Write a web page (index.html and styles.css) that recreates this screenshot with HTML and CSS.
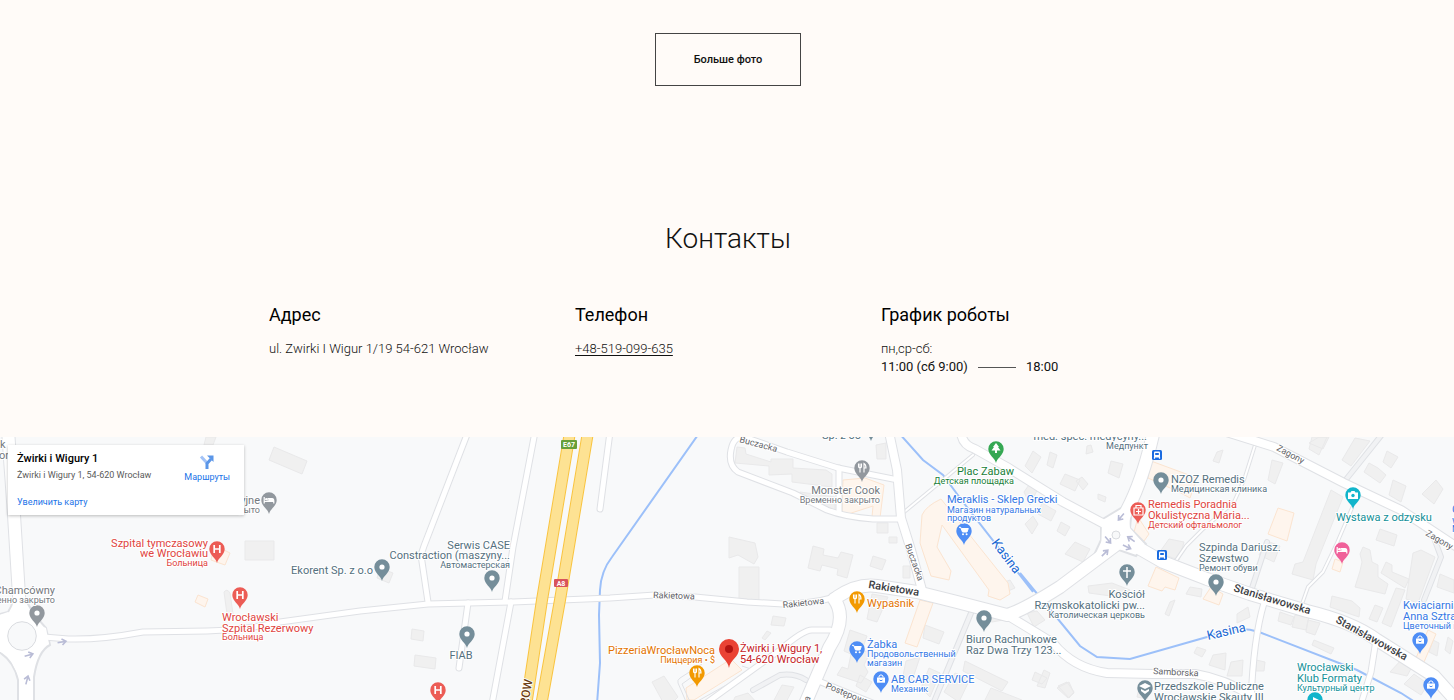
FILE: index.html
```html
<!DOCTYPE html>
<html lang="ru">
<head>
<meta charset="utf-8">
<meta name="viewport" content="width=device-width, initial-scale=1">
<title>Контакты</title>
<link rel="stylesheet" href="styles.css">
</head>
<body>
<main class="page">
  <section class="gallery-more">
    <button class="more-button" type="button">Больше фото</button>
  </section>

  <section class="contacts">
    <h2 class="contacts-title">Контакты</h2>
    <div class="contacts-grid">
      <div>
        <h3 class="column-title">Адрес</h3>
        <p class="column-text">ul. Zwirki I Wigur 1/19 54-621 Wrocław</p>
      </div>
      <div>
        <h3 class="column-title">Телефон</h3>
        <p class="column-text"><a class="phone" href="tel:+48519099635">+48-519-099-635</a></p>
      </div>
      <div>
        <h3 class="column-title">График роботы</h3>
        <p class="column-text">пн,ср-сб:</p>
        <p class="hours"><span>11:00 (сб 9:00)</span><span class="hours-line"></span><span>18:00</span></p>
      </div>
    </div>
  </section>

  <section class="map" aria-label="Карта">
    <svg class="map-canvas" viewBox="0 437 1454 263" preserveAspectRatio="xMidYMin slice">
      <defs>
        <path id="pin" d="M0 14C-1 9-7.700 6-7.700 0A7.700 7.700 0 1 1 7.700 0C7.700 6 1 9 0 14Z"/>
        <g id="dot"><use href="#pin"/><circle r="2.600" fill="#fff"/></g>
        <g id="hospital"><use href="#pin"/><path d="M-2.800-4V4M2.800-4V4M-2.800 0H2.800" fill="none" stroke="#fff" stroke-width="1.700"/></g>
        <g id="food"><use href="#pin"/><path d="M-3.500-4.500V-1.500Q-3.500 0-2 0T-.500-1.500V-4.500M-2-4.500V4.500M2 4.500V-4.500Q4-3.500 4 0H2" fill="none" stroke="#fff" stroke-width="1.100"/></g>
        <g id="cart"><use href="#pin"/><path d="M-5-3.700H-3.300L-1.500 1H3L4.300-2.500H-2.600" fill="#fff" stroke="#fff"/><circle cx="-1" cy="3.200" r="1" fill="#fff"/><circle cx="2.600" cy="3.200" r="1" fill="#fff"/></g>
        <g id="bag"><use href="#pin"/><path d="M-4-1.500H4V3.700H-4Z" fill="#fff"/><path d="M-2-1.500V-3Q0-5.500 2-3V-1.500" fill="none" stroke="#fff"/><path d="M-1.500 1Q0 2.500 1.500 1" fill="none" stroke="#4e8df5"/></g>
        <g id="bed"><use href="#pin"/><path d="M-4.800-3V3.500M-4.800 1.500H4.800V3.500M-1 1V-1.500H3Q4.800-1.500 4.800 1" fill="none" stroke="#fff" stroke-width="1.200"/><path d="M-.500-1.500H3Q4.500-1.500 4.500 1H-.500Z" fill="#fff"/><circle cx="-2.700" cy="-.800" r="1.200" fill="#fff"/></g>
        <g id="bus"><rect x="-5" y="-5" width="10" height="10" rx="1.500" fill="#1a6be0"/><rect x="-3" y="-3.500" width="6" height="6" rx="1" fill="#fff"/><path d="M-1.800-2H1.800V0H-1.800Z" fill="#1a6be0"/><path d="M-2.500 2V3.700M2.500 2V3.700" stroke="#fff" stroke-width="1.200"/></g>
        <path id="arrow" d="M-4.500 0H3M0-3L4 0L0 3" fill="none" stroke="#b9bcd6" stroke-width="1.600"/>
        <g id="lanes">
          <path d="M1256 442L1244 480L1234 502L1202 530L1186 546L1175 562"/>
          <path d="M1352 508L1337 543L1323 572L1308 587L1302 604"/>
          <path d="M903 513L973 455"/>
        </g>
        <g id="streets">
          <path d="M468 432L424 546L421 555L428 602"/>
          <path d="M535 432L513 547L505 601"/>
          <path d="M511 602L492 704"/>
          <path d="M468 603L459 668"/>
          <path d="M610 432L600 509"/>
          <path d="M44 637L68 639Q100 640 143 632L207 631Q245 630 280 622L360 611L428 604L513 602L610 598L655 595L695 597L747 602L783 604Q810 604 836 597"/>
          <path d="M898 480L873 475L838 468L787 452L747 438Q734 434 731 450Q728 465 738 472L793 493L827 510Q845 517 873 519H901"/>
          <path d="M839 468V513"/>
          <path d="M830 630H812Q803 630 780 650L705 704"/>
          <path d="M816 680L875 704"/>
          <path d="M1264 603Q1253 640 1251 704"/>
          <path d="M1376 640L1371 672L1361 704"/>
        </g>
        <g id="roads">
          <path d="M889 432L897 470L901 518L911 550L922 590"/>
          <path d="M961 432Q962 445 975 449L1007 467L1063 502L1108 526"/>
          <path d="M1007 615L1053 643Q1073 668 1107 673L1153 674H1195Q1225 679 1254 697"/>
          <path d="M1220 430L1274 447L1344 483L1401 510L1460 549"/>
        </g>
        <g id="avenues">
          <path d="M8 430L14 515L20 612"/>
          <path d="M25 652V705"/>
          <path d="M837 597Q858 583 877 586L917 592L957 602L1007 615Q1022 611 1060 587L1116 545"/>
          <path d="M1154 430Q1143 480 1127 510L1116 535"/>
          <path d="M1116 535L1163 562L1207 579L1250 594L1307 611Q1353 622 1377 640L1434 676L1460 705"/>
          <path d="M834 599Q848 618 829 648L805 704"/>
        </g>
      </defs>
      <rect x="-700" y="437" width="2854" height="900" fill="#f8f9fa"/>

      <path class="building" d="M274 447L307 461L302 474L269 460ZM245 541H274V560H245ZM224 592Q227 588 230 593L233 614H227ZM206 437H216L213 445H204ZM412 629L424 631L423 641L411 639ZM415 655L436 658L435 669L414 666ZM380 568L393 573L389 583L377 578Z"/>
      <path class="building" d="M737 447L745 448L746 454L771 462V459L793 459V468L826 470L832 474V487L792 482V474L769 475V466L735 463ZM729 537L755 543L758 557L754 564L738 555L729 558ZM739 567H759V602H739ZM773 616L786 618L784 626L771 625ZM767 631L771 633L765 640L762 638ZM813 546L824 549L823 555L838 558L841 552L853 555L847 578L837 575L838 569L822 565L820 571L808 568ZM873 556L886 560L882 570L870 566ZM876 445L886 443V459H877ZM800 492L835 497V510L800 500ZM877 523H888V533H877ZM889 537H897V543H889ZM903 566H910V578H903ZM872 594L888 597L877 622L867 619ZM850 630L867 636L862 650L870 653L864 665L868 672L861 683L837 675L842 667L848 669L851 654L844 651ZM860 675L872 682L866 692L856 686ZM652 682L664 676L678 697L671 704H664ZM735 697L748 693L758 704H732ZM782 685L794 687L785 704H772Z"/>
      <path class="building" d="M925 625L944 632L939 644L923 638ZM906 661L920 657L911 684L902 681ZM921 688L929 668L940 673L930 697ZM944 692L955 673L970 679L959 702ZM965 661L1008 682L1002 691L963 671ZM983 704L991 688L1022 700L1018 708ZM1037 686L1044 670L1050 673L1045 688ZM1058 686L1067 682L1074 692L1069 698ZM1002 583L1010 580L1015 588L1006 592ZM978 605L993 608L1003 620L992 622L978 614ZM1025 466L1033 451L1041 457L1032 473ZM1050 452L1057 455L1053 468L1047 465ZM1087 446L1091 445L1093 452L1086 454ZM1111 461L1123 464L1119 478L1108 473ZM1065 474L1080 480L1075 491L1060 484ZM1076 481L1082 477L1088 484L1083 490ZM1098 494L1106 497L1105 502L1098 499ZM1042 503L1056 511L1051 521L1038 514ZM1025 524L1033 516L1038 524L1032 534ZM1061 522L1070 527L1065 536L1057 531ZM1065 554L1075 542L1090 549L1083 562ZM1024 492L1033 479L1040 484L1030 505ZM1027 613L1037 611L1045 620L1034 627ZM1035 672L1047 678L1042 684L1032 680ZM1057 688L1069 682L1074 693L1068 698ZM1088 586L1112 583L1130 590L1118 597L1089 593Z"/>
      <path class="building" d="M1169 539L1184 542L1179 560L1159 553ZM1190 587L1202 589L1201 597L1186 594ZM1170 602L1175 600L1169 616L1165 614ZM1237 614L1248 607L1250 617L1237 623ZM1197 647L1206 650L1202 657L1194 653ZM1213 655L1226 653L1225 670L1209 665ZM1231 662L1243 660L1242 676H1227ZM1217 452L1223 450L1219 463L1213 461ZM1312 437L1327 437L1319 455L1309 449ZM1272 460L1283 463L1275 484L1268 480ZM1319 437H1329L1323 449L1309 443ZM1355 438L1370 441L1351 466L1342 460ZM1387 451L1398 457L1391 468L1383 462ZM1369 463L1378 468L1386 475L1380 483L1364 472ZM1393 480L1406 486L1401 502L1389 495ZM1436 480L1443 489L1434 504L1422 494ZM1331 490L1343 497L1316 564L1313 580L1292 574L1295 564L1303 562ZM1380 529L1397 535L1394 546L1376 540ZM1413 553L1421 550L1435 557L1418 603L1406 599ZM1440 574L1454 580V593L1437 587ZM1363 547L1370 550L1372 562L1378 565V577L1388 584L1385 594L1355 587L1360 571L1362 562L1360 554ZM1386 562L1392 565V572L1409 579L1405 588L1381 573ZM1332 596L1352 601L1360 608L1359 617L1330 607ZM1375 605L1383 608L1377 622L1369 619ZM1396 588L1405 590L1391 627L1382 623ZM1280 612L1294 617L1291 625L1278 621ZM1295 615L1309 617L1306 630L1292 627ZM1308 620L1320 623L1315 635L1306 632ZM1314 640L1334 648L1331 654L1312 645ZM1402 659L1413 665L1407 676L1390 672ZM1414 674L1428 684L1421 695L1404 684ZM1433 640L1439 643L1437 656L1429 652ZM1267 541L1280 546L1274 562L1259 555ZM1256 660L1265 662L1264 671H1256ZM1140 684L1151 689L1147 699L1137 697ZM1448 637L1453 641L1450 654L1445 650Z"/>
      <path class="shop" d="M843 480L865 478L884 485L880 518L872 517L873 506L842 516ZM922 515Q926 506 941 499L1008 583L1010 594L1000 600L988 596L989 590L942 525L937 547L951 571L949 580L931 576L920 543ZM920 600L933 603L917 647L905 643ZM686 688L731 659L742 670L694 700H687ZM1151 461L1197 478L1190 498L1179 492L1148 478ZM1138 517L1149 534L1144 541L1133 536ZM1156 567L1179 578L1175 590L1165 587L1162 591L1148 586ZM1211 587L1223 594L1219 605L1203 599ZM1278 508L1294 513L1287 541L1268 534ZM1335 559L1343 562L1340 572L1332 569ZM198 595L208 599L205 607L195 602ZM214 545L230 553L225 565L211 560ZM1428 630L1436 634L1424 662L1416 658Z"/>

      <path class="water" d="M700 432L612 557Q601 571 600 590L599 615L600 663L597 704M898 432L923 460L943 475L963 502L1033 592M1020 573L1053 613L1080 646L1097 657L1130 659L1207 637Q1236 624 1259 632L1357 670L1401 693L1418 704"/>

      <g class="service-edge"><path d="M1344 482L1384 432M1267 542L1252 588M1434 538L1441 557L1424 600M971 613L933 704M753 690L780 675Q795 673 806 680"/></g>
      <g class="service"><path d="M1344 482L1384 432M1267 542L1252 588M1434 538L1441 557L1424 600M971 613L933 704M753 690L780 675Q795 673 806 680"/></g>
      <path class="kerb" d="M687 704L678 683Q677 680 680 678L702 664M691 704L682 684L703 669M742 666L751 669L746 674L696 702"/>
      <use href="#lanes" class="lane-edge"/><use href="#lanes" class="lane"/>
      <use href="#streets" class="street-edge"/><use href="#roads" class="road-edge"/><use href="#avenues" class="avenue-edge"/>
      <path class="junction" d="M8 612Q12 606 13 600H26Q32 613 46 628L50 645Q38 651 34 677V704H18V680Q14 660-4 650V615Z"/>
      <path class="junction" d="M1101 520L1121 508H1132L1130 528L1146 544L1136 556L1119 550L1102 559L1094 555L1101 540Z"/>
      <use href="#streets" class="street"/><use href="#roads" class="road"/><use href="#avenues" class="avenue"/>
      <path class="junction-fill" d="M8 612L46 628L49 644L34 650L32 677H19L8 655L-4 650V616ZM1102 521L1128 512L1130 528L1142 542L1134 552L1118 549L1101 556Z"/>
      <circle class="island" cx="22" cy="636" r="14.300"/>
      <circle class="island" cx="1116" cy="535" r="4"/>
      <path class="highway-edge" d="M570 432L542 600L526 706M588 432L560 600L541 706"/>
      <path class="highway" d="M570 432L542 600L526 706M588 432L560 600L541 706"/>

      <g>
        <use href="#arrow" transform="translate(62 642) rotate(-10)"/>
        <use href="#arrow" transform="translate(29 655) rotate(-15)"/>
        <use href="#arrow" transform="translate(27 680) rotate(-75)"/>
        <use href="#arrow" transform="translate(1121 517) rotate(130)"/>
        <use href="#arrow" transform="translate(1108 540) rotate(50)"/>
        <use href="#arrow" transform="translate(1105 553) rotate(-45)"/>
        <use href="#arrow" transform="translate(1131 539) rotate(215)"/>
        <use href="#arrow" transform="translate(1127 547) rotate(25)"/>
      </g>

      <rect x="561" y="440" width="16" height="9" rx="1" fill="#689f38"/>
      <text class="shield" x="569" y="447">E67</text>
      <rect x="554" y="579" width="14" height="8" rx="1" fill="#d8545b"/>
      <text class="shield" x="561" y="586">A8</text>

      <g fill="#92989e">
        <use href="#bed" x="269" y="500"/><use href="#dot" x="37" y="613"/><use href="#food" x="862" y="468"/>
      </g>
      <g fill="#758e9a">
        <use href="#dot" x="382" y="567"/><use href="#dot" x="492" y="578"/><use href="#dot" x="467" y="634"/>
        <use href="#dot" x="984" y="618"/><use href="#dot" x="1161" y="480"/><use href="#dot" x="1216" y="582"/>
        <use href="#pin" x="1127" y="572"/><use href="#pin" x="1145" y="688"/><use href="#pin" x="871" y="427"/>
      </g>
      <path d="M1127 567V578M1123 571H1131" stroke="#fff" stroke-width="1.500"/>
      <path d="M1139 686L1145 683L1151 686L1145 689ZM1141 689L1145 691L1149 689V691L1145 694L1141 691Z" fill="#fff"/>
      <g fill="#ec5c55">
        <use href="#hospital" x="217" y="549"/><use href="#hospital" x="240" y="595"/><use href="#hospital" x="438" y="690"/><use href="#pin" x="1138" y="510"/>
      </g>
      <path d="M1134 508H1143V515H1134ZM1136 508V505.500H1141V508M1138.500 509V514M1136 511.500H1141" fill="none" stroke="#fff" stroke-width="1.200"/>
      <g fill="#f29900"><use href="#food" x="857" y="599"/><use href="#food" x="697" y="673"/></g>
      <g fill="#4e8df5">
        <use href="#cart" x="964" y="531"/><use href="#cart" x="857" y="649"/><use href="#bag" x="881" y="679"/><use href="#bag" x="1420" y="640"/><use href="#bag" x="1431" y="685"/>
      </g>
      <use href="#pin" x="996" y="449" fill="#35a853"/>
      <path d="M996 443L999 447H998L1000.500 450.500H997V453H995V450.500H991.500L994 447H993Z" fill="#fff"/>
      <g fill="#12b5cb"><use href="#pin" x="1353" y="495"/><use href="#pin" x="1315" y="700"/></g>
      <path d="M1348 492.500H1350.500L1351.500 491H1354.500L1355.500 492.500H1358V499H1348Z" fill="#fff"/><circle cx="1353" cy="495.500" r="1.700" fill="#12b5cb"/>
      <path d="M1313 697L1319 700L1313 702Z" fill="#fff"/>
      <use href="#bed" x="1342" y="550" fill="#f0619a"/>
      <use href="#bus" x="1157" y="455"/><use href="#bus" x="1162" y="555"/>
      <path d="M729 668C728 660 719 657 719 649A10 10 0 0 1 739 649C739 657 730 660 729 668Z" fill="#ea4335"/><circle cx="729" cy="649" r="4" fill="#b31412"/>

      <g class="label grey">
        <text x="0" y="448">k</text><text x="-1" y="459">or</text>
        <text class="end" x="260" y="504">yjne</text><text class="small end" x="260" y="513">рыто</text>
        <text class="end" x="55" y="594">Chamcówny</text><text class="small end" x="55" y="603">Временно закрыто</text>
        <text class="end" x="880" y="494">Monster Cook</text><text class="small end" x="880" y="503">Временно закрыто</text>
      </g>
      <g class="label slate">
        <text class="end" x="373" y="574">Ekorent Sp. z o.o</text>
        <text class="end" x="510" y="549">Serwis CASE</text><text class="end" x="510" y="559">Constraction (maszyny...</text><text class="small end" x="510" y="568">Автомастерская</text>
        <text class="mid" x="461" y="659">FIAB</text>
        <text class="end" x="861" y="439">Sp. z oo</text>
        <text class="end" x="1147" y="440">med. spec. medycyny...</text><text class="small end" x="1148" y="449">Медпункт</text>
        <text x="1171" y="483">NZOZ Remedis</text><text class="small" x="1171" y="492">Медицинская клиника</text>
        <text x="1199" y="551">Szpinda Dariusz.</text><text x="1199" y="562">Szewstwo</text><text class="small" x="1199" y="571">Ремонт обуви</text>
        <text class="end" x="1145" y="598">Kościół</text><text class="end" x="1145" y="609">Rzymskokatolicki pw...</text><text class="small end" x="1145" y="618">Католическая церковь</text>
        <text x="966" y="643">Biuro Rachunkowe</text><text x="966" y="654">Raz Dwa Trzy 123...</text>
        <text x="1154" y="690">Przedszkole Publiczne</text><text x="1154" y="701">Wrocławskie Skauty III</text>
      </g>
      <g class="label red">
        <text class="end" x="208" y="547">Szpital tymczasowy</text><text class="end" x="208" y="557">we Wrocławiu</text><text class="small end" x="208" y="566">Больница</text>
        <text x="222" y="621">Wrocławski</text><text x="222" y="632">Szpital Rezerwowy</text><text class="small" x="222" y="640">Больница</text>
        <text x="1148" y="508">Remedis Poradnia</text><text x="1148" y="519">Okulistyczna Maria...</text><text class="small" x="1148" y="528">Детский офтальмолог</text>
      </g>
      <g class="label dark-red"><text x="740" y="652">Żwirki i Wigury 1,</text><text x="740" y="663">54-620 Wrocław</text></g>
      <g class="label orange">
        <text class="end" x="715" y="654">PizzeriaWrocławNoca</text><text class="small end" x="715" y="663">Пиццерия • $</text>
        <text x="867" y="607">Wypaśnik</text>
      </g>
      <g class="label green"><text class="end" x="1014" y="475">Plac Zabaw</text><text class="small end" x="1014" y="484">Детская площадка</text></g>
      <g class="label blue">
        <text x="947" y="503">Meraklis - Sklep Grecki</text><text class="small" x="947" y="513">Магазин натуральных</text><text class="small" x="947" y="521">продуктов</text>
        <text x="867" y="648">Żabka</text><text class="small" x="867" y="657">Продовольственный</text><text class="small" x="867" y="666">магазин</text>
        <text x="891" y="683">AB CAR SERVICE</text><text class="small" x="891" y="692">Механик</text>
        <text x="1403" y="609">Kwiaciarnia</text><text x="1403" y="620">Anna Sztraba</text><text class="small" x="1403" y="629">Цветочный магазин</text>
        <text x="1452" y="513">C</text><text x="1452" y="524">w</text><text class="small" x="1452" y="532">М</text>
      </g>
      <g class="label teal">
        <text x="1336" y="521">Wystawa z odzysku</text>
        <text x="1297" y="671">Wrocławski</text><text x="1297" y="682">Klub Formaty</text><text class="small" x="1297" y="691">Культурный центр</text>
      </g>
      <g class="label street-name">
        <text transform="translate(739 442) rotate(15)">Buczacka</text>
        <text transform="translate(905 545) rotate(70)">Buczacka</text>
        <text transform="translate(653 598) rotate(2)">Rakietowa</text>
        <text transform="translate(783 608) rotate(-6)">Rakietowa</text>
        <text transform="translate(825 688) rotate(22)">Postępowa</text>
        <text transform="translate(1153 674) rotate(3)">Samborska</text>
        <text transform="translate(1276 450) rotate(28)">Zagony</text>
        <text transform="translate(1425 535) rotate(30)">Zagony</text>
        <text transform="translate(809 702) rotate(-68)">a</text>
      </g>
      <g class="label main-name">
        <text transform="translate(868 588) rotate(9)">Rakietowa</text>
        <text transform="translate(1233 591) rotate(17)">Stanisławowska</text>
        <text transform="translate(1335 622) rotate(29)">Stanisławowska</text>
      </g>
      <g class="label river-name">
        <text transform="translate(991 543) rotate(53)">Kasina</text>
        <text transform="translate(1208 640) rotate(-13)">Kasina</text>
      </g>
      <text class="highway-name" transform="translate(528 706) rotate(-80)">ROW</text>
    </svg>

    <aside class="place-card">
      <div class="place-main">
        <strong class="place-name">Żwirki i Wigury 1</strong>
        <span class="place-address">Żwirki i Wigury 1, 54-620 Wrocław</span>
        <a class="place-link" href="#map">Увеличить карту</a>
      </div>
      <a class="place-route" href="#route">
        <svg class="route-icon" viewBox="0 0 16 16"><path d="M2 2.500L8 9" stroke="#a3c3f7" stroke-width="3"/><path d="M8 15V9.500L12 5" fill="none" stroke="#5b96e8" stroke-width="3"/><path d="M8 1.500H14.500V8Z" fill="#5b96e8"/></svg>
        <span>Маршруты</span>
      </a>
    </aside>
  </section>
</main>
</body>
</html>
```

FILE: styles.css
```css
* { box-sizing: border-box; }
body {
  margin: 0;
  background: #fffbf8;
  color: #111;
  font-family: Roboto, "Noto Sans", sans-serif;
}
h2, h3, p { margin: 0; }

.page { display: flex; flex-direction: column; min-height: 100vh; }

.gallery-more { display: flex; justify-content: center; padding-top: 33px; }
.more-button {
  margin-left: 2px;
  padding: 19px 38px 18px;
  border: 1px solid #444;
  background: transparent;
  color: #111;
  font: 500 11px/14px Roboto, sans-serif;
}

.contacts { padding: 132px 20px 61px 22px; }
.contacts-title {
  text-align: center;
  font-size: 28px;
  font-weight: 300;
  line-height: 42px;
}
.contacts-grid {
  display: grid;
  grid-template-columns: repeat(3, 1fr);
  max-width: 918px;
  margin: 43px auto 0;
}
.column-title { margin-bottom: 13px; font-size: 18px; font-weight: 400; line-height: 24px; color: #000; }
.column-text { font-size: 13px; font-weight: 300; line-height: 18px; }
.phone { color: inherit; text-underline-offset: 2px; }
.hours { display: flex; align-items: center; gap: 10px; font-size: 13px; line-height: 18px; }
.hours-line { width: 38px; height: 1px; background: #555; }

.map { position: relative; flex: 1 0 220px; overflow: hidden; background: #f8f9fa; }
.map-canvas { position: absolute; inset: 0; width: 100%; height: 100%; display: block; }

.building { fill: #f0f0f0; stroke: #e9e9ea; stroke-width: 1; }
.shop { fill: #fef5ed; stroke: #fbe4d0; stroke-width: 1; }
.water { fill: none; stroke: #9cc0f9; stroke-width: 2; }

.lane, .lane-edge, .service, .service-edge, .street, .street-edge,
.road, .road-edge, .avenue, .avenue-edge, .highway, .highway-edge {
  fill: none;
  stroke-linecap: round;
  stroke-linejoin: round;
}
.lane, .street, .road, .avenue { stroke: #fff; }
.lane-edge, .street-edge, .road-edge, .avenue-edge, .service-edge { stroke: #dfe1e5; }
.service { stroke: #f1f2f4; stroke-width: 4px; }
.service-edge { stroke-width: 6px; }
.kerb { fill: none; stroke: #dfe1e5; stroke-width: 1px; }
.lane { stroke-width: 2px; }
.lane-edge { stroke-width: 4px; }
.street { stroke-width: 5px; }
.street-edge { stroke-width: 7px; }
.road { stroke-width: 8px; }
.road-edge { stroke-width: 10px; }
.avenue { stroke-width: 12px; }
.avenue-edge { stroke-width: 14px; }
.junction { fill: #fff; stroke: #dfe1e5; stroke-width: 2px; }
.junction-fill { fill: #fff; }
.island { fill: #f8f9fa; stroke: #dadce0; }
.highway { stroke: #fde293; stroke-width: 10px; }
.highway-edge { stroke: #f9c440; stroke-width: 12px; }

.label { font-size: 11px; stroke: #fff; stroke-width: 2px; stroke-linejoin: round; paint-order: stroke; }
.small { font-size: 9px; }
.end { text-anchor: end; }
.mid { text-anchor: middle; }
.grey { fill: #74797e; }
.slate { fill: #54707e; }
.red { fill: #e04440; }
.dark-red { fill: #c5221f; }
.orange { fill: #e37400; }
.green { fill: #188038; }
.blue { fill: #3478e5; }
.teal { fill: #129098; }
.street-name { font-size: 9px; fill: #5f6368; }
.main-name { font-size: 11px; font-weight: 500; fill: #3c4043; }
.river-name { font-size: 13px; fill: #1967d2; }
.shield { fill: #fff; font-size: 7px; font-weight: 700; text-anchor: middle; }
.highway-name { font-size: 12px; font-weight: 500; fill: #6b3d12; stroke: #fff; stroke-width: 2px; paint-order: stroke; }

.place-card {
  position: absolute;
  top: 8px;
  left: 8px;
  display: flex;
  justify-content: space-between;
  width: 236px;
  padding: 6px 14px 6px 9px;
  background: #fff;
  box-shadow: 0 1px 3px rgba(0, 0, 0, .25);
  font-size: 9px;
}
.place-main { display: flex; flex-direction: column; line-height: 14px; }
.place-name { font-size: 11px; font-weight: 500; line-height: 16px; color: #000; }
.place-address { margin-top: 1px; color: #5b5b5b; }
.place-link { margin-top: 13px; color: #1a73e8; text-decoration: none; }
.place-route {
  display: flex;
  flex-direction: column;
  align-items: center;
  padding-top: 3px;
  color: #1a73e8;
  line-height: 14px;
  text-decoration: none;
}
.route-icon { width: 16px; height: 16px; fill: none; }
```
